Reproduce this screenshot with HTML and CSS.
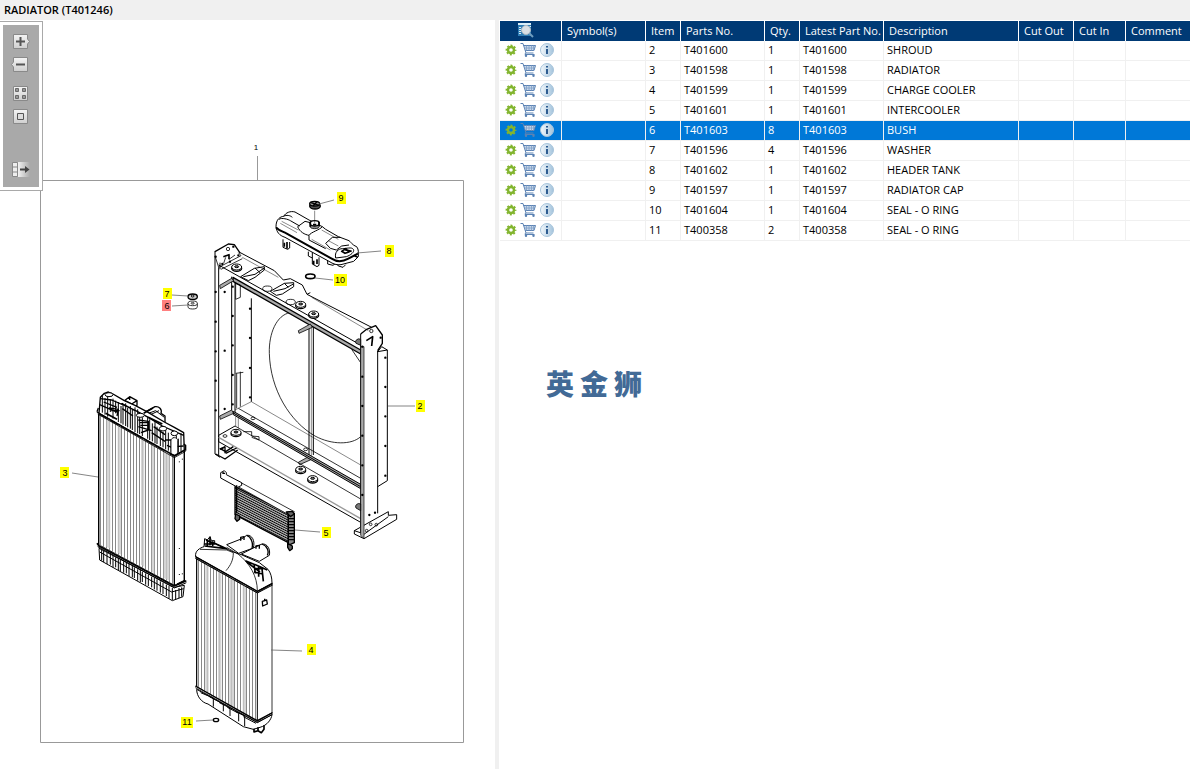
FILE: index.html
```html
<!DOCTYPE html>
<html lang="en">
  <head>
    <meta charset="UTF-8" />
    <meta name="viewport" content="width=device-width, initial-scale=1.0" />
    <title>RADIATOR (T401246)</title>
    <link rel="stylesheet" href="styles.css">
  </head>
  <body>
    <!-- shared icons -->
    <svg class="sprite" aria-hidden="true">
      <defs>
        <linearGradient id="btn-face" x1="0" y1="0" x2="0" y2="1">
          <stop offset="0" stop-color="#f4f4f4" />
          <stop offset="1" stop-color="#cfcfcf" />
        </linearGradient>
        <linearGradient id="info-face" x1="0" y1="0" x2="1" y2="0">
          <stop offset="0" stop-color="#f4f9fc" />
          <stop offset="1" stop-color="#a3c3dc" />
        </linearGradient>
        <linearGradient id="fade" x1="0" y1="0" x2="1" y2="0">
          <stop offset="0" stop-color="#f2f2f2" />
          <stop offset="1" stop-color="#a9a9a9" />
        </linearGradient>
        <symbol id="gear" viewBox="0 0 12 12">
          <circle cx="6" cy="6" r="3" fill="none" stroke="#82b52e" stroke-width="2.4" />
          <circle cx="6" cy="6" r="4.6" fill="none" stroke="#82b52e" stroke-width="1.6" stroke-dasharray="2 1.61" stroke-dashoffset="1" />
        </symbol>
        <symbol id="cart" viewBox="0 0 17 16">
          <path d="M3.5 3H15.500L14 8.500H5.500Z" fill="#c9d7e9" />
          <path d="M.5 1.500H3L6 11H13.500M3.500 3.500H15.500L14 8.500H5.300" fill="none" stroke="#5b82b3" />
          <path d="M4.500 6H14.800M6.500 3.500V8.500M9 3.500V8.500M11.500 3.500V8.500M13.500 3.500V8.500" fill="none" stroke="#7f9fc6" stroke-width="0.8" />
          <path d="M5.500 11L5 12.500H14.500" fill="none" stroke="#5b82b3" />
          <circle cx="6" cy="13.700" r="1.200" fill="#5b82b3" />
          <circle cx="13.500" cy="13.700" r="1.200" fill="#5b82b3" />
        </symbol>
        <symbol id="info" viewBox="0 0 14 14">
          <circle cx="7" cy="7" r="6.500" fill="url(#info-face)" stroke="#a8c5db" />
          <path d="M6 3H8V4.500H6ZM6 6H8V11H6Z" fill="#2d5c90" />
        </symbol>
      </defs>
    </svg>

    <header class="title-bar">
      <h1>RADIATOR (T401246)</h1>
    </header>

    <main class="panes">
      <section class="drawing-pane">
        <div class="toolbar">
          <button type="button" aria-label="Zoom in">
            <svg viewBox="0 0 20 17">
              <path d="M2.500 1.500H16.500V6L18.500 8.500L16.500 11V15.500H2.500Z" fill="url(#btn-face)" stroke="#898989" />
              <path d="M5 8.500H14M9.500 4V13" stroke="#555" stroke-width="2" />
            </svg>
          </button>
          <button type="button" aria-label="Zoom out">
            <svg viewBox="0 0 20 17">
              <path d="M2.500 1.500H16.500V15.500H2.500V11L.5 8.500L2.500 6Z" fill="url(#btn-face)" stroke="#898989" />
              <path d="M5 8.500H14" stroke="#555" stroke-width="2" />
            </svg>
          </button>
          <button type="button" class="gap-above" aria-label="Fit page">
            <svg viewBox="0 0 20 17">
              <path d="M2.500 1.500H16.500V15.500H2.500Z" fill="url(#btn-face)" stroke="#898989" />
              <path d="M4.500 3.500H7.500V6.500H4.500ZM11.500 3.500H14.500V6.500H11.500ZM4.500 10.500H7.500V13.500H4.500ZM11.500 10.500H14.500V13.500H11.500Z" fill="#999" stroke="#6a6a6a" />
            </svg>
          </button>
          <button type="button" aria-label="Actual size">
            <svg viewBox="0 0 20 17">
              <path d="M2.500 1.500H16.500V15.500H2.500Z" fill="url(#btn-face)" stroke="#898989" />
              <path d="M6.500 5.500H12.500V11.500H6.500Z" fill="#ddd" stroke="#555" />
            </svg>
          </button>
          <button type="button" class="gap-end" aria-label="Hide drawing">
            <svg viewBox="0 0 20 17">
              <path d="M7 1H19V16H7Z" fill="url(#fade)" />
              <path d="M1.500 1.500H6.500V15.500H1.500ZM1.500 6H6.500M1.500 11H6.500" fill="#eee" stroke="#898989" />
              <path d="M9 8.500H15" stroke="#444" stroke-width="2" />
              <path d="M14 5L18.500 8.500L14 12Z" fill="#444" />
            </svg>
          </button>
        </div>

        <svg class="drawing" viewBox="0 20 495 749" role="img" aria-label="Radiator exploded view">
          <defs>
            <pattern id="fins" width="9" height="10" patternUnits="userSpaceOnUse">
              <path d="M1.500 0V10" stroke="#888" stroke-width="3" />
            </pattern>
            <pattern id="mesh" width="4" height="7" patternUnits="userSpaceOnUse" patternTransform="skewY(27)">
              <path d="M0 3H4" stroke="#000" stroke-width="4" />
            </pattern>
            <g id="washer">
              <ellipse cy="4" rx="15" ry="9" fill="#fff" stroke="#000" stroke-width="4" />
              <ellipse rx="15" ry="9" fill="#fff" stroke="#000" stroke-width="3" />
              <ellipse cy="-1" rx="6" ry="3" fill="#777" stroke="#000" stroke-width="3" />
            </g>
          </defs>

          <path class="frame" d="M40.500 180.500H463.500V742.500H40.500ZM257.500 156V180" />

          <!-- shroud -->
          <svg x="205" y="180" width="200" height="370" viewBox="0 0 600 1110">
            <g class="ink">
              <path d="M255 398C215 405 191 460 193 520C196 630 255 725 330 768C380 795 440 795 467 770M440 508L467 548" />
              <path d="M312 440V830M325 435V825" stroke-width="3" />
              <path class="thin" d="M319 440V830" />
              <path d="M30 213V822L45 832M41 262V825M80 290V690M90 300V700M139 355V665" stroke-width="3" />
              <path d="M30 215L70 192L88 194L106 220" stroke-width="4" />
              <path d="M41 262L108 227L100 218M56 250L62 232M72 238L90 225M48 268L112 236M30 228L41 262" />
              <path d="M106 218L208 272L235 300L256 296L292 315L306 343L500 442M306 343L316 338" stroke-width="3" />
              <path class="thin" d="M112 232L220 292M320 352L490 452" />
              <path d="M41 255L467 495M45 248V268" stroke-width="3" />
              <path class="grey-fill" d="M84 292L467 510V522L84 304Z" stroke-width="4" />
              <path class="grey-fill" d="M44 316L80 295L86 302L46 326ZM280 452L316 432L322 442L282 460ZM44 708L80 690L86 700L46 718ZM280 847L314 828L320 838L284 854Z" />
              <path d="M107 290L148 265L178 260V270L150 292L130 302ZM150 264L165 278M196 334L238 310L266 308V320L232 342L214 346ZM238 310L250 322M115 290L150 283L178 264M205 334L240 326L265 312" stroke-width="3" />
              <ellipse cx="187" cy="326" rx="14" ry="8" />
              <ellipse cx="257" cy="366" rx="14" ry="8" />
              <path d="M90 310L106 315V352L92 358V310M106 680V575M95 580V685M92 580L115 577" />
              <path class="thin" d="M139 665L467 855M139 665L90 690M92 740V710M100 745V712" />
              <path d="M100 685L467 895M90 738L467 957" />
              <path class="grey-fill" d="M85 694L467 913V926L85 704Z" stroke-width="3" />
              <path d="M85 699L467 920" stroke-width="3" />
              <path d="M41 766L90 738M41 766V785L467 1027" stroke-width="3" />
              <path d="M41 772L467 1016" stroke="#999" stroke-width="4" />
              <path d="M32 822L60 837L98 810M44 805L62 815L85 800M60 820V800L45 808M62 820L95 804" stroke-width="4" />
              <path d="M115 755L140 755V768L162 770V780L140 772" />
              <path d="M467 462L485 448L512 437L532 465V490L518 512" stroke-width="4" />
              <path d="M467 1065V462M518 512V1000M467 1065L477 1075M518 515L530 500L547 510V902L518 920M518 515L547 510" stroke-width="3" />
              <path class="white" d="M448 1052L550 995V1006L575 1004V1018L477 1076L448 1062ZM448 1052L478 1062L550 1010" stroke-width="3" />
              <path class="grey-fill" d="M467 500V1066L477 1076V500Z" stroke-width="2" />
              <path d="M484 482L503 470L500 498M55 230L72 224V238" stroke-width="5" />
              <circle cx="499" cy="453" r="5" /><circle cx="69" cy="207" r="5" />
              <circle cx="497" cy="1033" r="4" /><circle cx="514" cy="1034" r="4" /><circle cx="485" cy="1052" r="4" />
              <ellipse cx="144" cy="715" rx="6" ry="4" /><ellipse cx="302" cy="808" rx="6" ry="4" /><ellipse cx="60" cy="768" rx="6" ry="4" />
              <path d="M453 490A10 9 0 0 1 467 478V496ZM453 984A10 9 0 0 1 467 972V992Z" fill="#777" />
              <use href="#washer" x="95" y="261" /><use href="#washer" x="287" y="373" /><use href="#washer" x="326" y="402" />
              <use href="#washer" x="93" y="757" /><use href="#washer" x="287" y="868" /><use href="#washer" x="323" y="896" />
            </g>
            <g class="bolts">
              <path d="M32 230h.1M32 336h.1M32 425h.1M32 514h.1M32 602h.1M32 691h.1M59 336h.1M59 512h.1M59 687h.1M83 320h.1M83 408h.1M83 496h.1M83 585h.1M83 673h.1" />
              <path d="M135 386h.1M135 474h.1M135 564h.1M135 652h.1M52 805h.1M52 252h.1M85 200h.1M75 245h.1M100 226h.1" />
              <path d="M472 500h.1M472 590h.1M472 678h.1M472 767h.1M472 856h.1M472 945h.1M541 533h.1M541 621h.1M541 709h.1M541 798h.1M541 887h.1M527 473h.1M510 998h.1M493 1005h.1" />
            </g>
          </svg>

          <!-- header tank, cap and o-ring -->
          <svg x="205" y="180" width="200" height="120" viewBox="0 0 600 360">
            <g class="ink">
              <ellipse cx="330" cy="78" rx="16" ry="9" fill="#555" stroke-width="4" />
              <ellipse cx="329" cy="71" rx="15" ry="7" fill="#999" stroke-width="4" />
              <path d="M318 68L342 76M336 65L324 78" stroke-width="4" />
              <path class="white" d="M234 178V202L248 208L254 204V186M322 215V252L336 260L342 256V232M310 215V228L322 234M368 240V252L384 256L394 248L400 258L414 262L422 254" stroke-width="3" />
              <path class="white" d="M213 140C213 118 225 110 236 109C242 98 256 92 270 96L312 120L352 140L362 148L400 170L432 182C440 188 440 194 455 200C462 208 460 222 460 230L446 244L408 254C396 256 384 252 372 244L240 172C222 166 215 156 213 140Z" stroke-width="3" />
              <path d="M213 142C222 152 232 154 244 160L380 236C395 246 412 246 430 236L460 220" stroke-width="6" />
              <path d="M236 109C244 104 256 106 262 112M222 118C230 112 250 118 256 122L284 138M278 140L300 124L316 128M278 140C284 156 300 164 312 166V180L362 206M312 166C318 156 344 150 352 140M362 190L382 172L406 172M362 190L376 205L394 210L410 198L432 195M392 234C388 216 400 206 412 206C424 206 440 200 445 208C450 216 436 226 424 230Z" stroke-width="3" />
              <path class="thin" d="M230 124L280 150M226 130L276 158M320 178L376 210M370 182L400 198M350 150L400 178" />
              <ellipse cx="329" cy="138" rx="14" ry="8" fill="#888" />
              <ellipse cx="329" cy="130" rx="14" ry="8" fill="#fff" stroke-width="4" />
              <path d="M316 126V140M342 126V138M324 134H334M410 214L422 206L432 216L420 220ZM416 208L440 214M446 226L458 232" stroke-width="5" />
              <path class="thin" d="M329 92V130" />
              <path d="M238 188V200M246 186V206M326 242V254M336 238V252" stroke-width="5" />
              <ellipse cx="316" cy="289" rx="14" ry="7" stroke-width="5" />
            </g>
          </svg>

          <!-- bush and washer -->
          <svg x="150" y="270" width="80" height="50" viewBox="0 0 240 150">
            <g class="ink">
              <ellipse cx="128" cy="80" rx="14" ry="8" stroke-width="4" fill="#ccc" />
              <ellipse cx="128" cy="78" rx="4" ry="3" fill="#fff" stroke-width="3" />
              <path d="M114 100V110A14 7 0 0 0 142 110V100" fill="#fff" />
              <ellipse cx="128" cy="100" rx="14" ry="7" fill="#fff" />
              <ellipse cx="128" cy="100" rx="5" ry="3" fill="#999" class="thin" />
            </g>
          </svg>

          <!-- intercooler -->
          <svg x="205" y="460" width="200" height="100" viewBox="0 300 600 300">
            <g class="ink">
              <path d="M90 380L250 460V548L90 464Z" fill="url(#mesh)" stroke-width="4" />
              <path class="white" d="M92 376L108 368L268 455L254 466Z" />
              <path class="white" d="M47 338L58 332L64 338V344L110 368V376L98 382L47 354Z" stroke-width="3" />
              <path d="M52 340h8M54 336V342" stroke-width="4" />
              <path d="M250 466L268 460V548L250 556Z" fill="#888" stroke-width="4" />
              <path d="M250 476H268M250 485H268M250 494H268M250 503H268M250 512H268M250 521H268M250 530H268M250 539H268M95 376V460" stroke-width="4" />
              <path d="M92 462L104 468V478L96 484L90 476ZM248 550L262 558V566L254 572L248 562ZM244 456L262 454L268 462L256 470Z" fill="#666" stroke-width="4" />
            </g>
          </svg>

          <!-- radiator -->
          <svg x="85" y="380" width="120" height="230" viewBox="0 0 360 690">
            <g class="ink">
              <path class="white" d="M118 62L134 50L156 62V76L140 84ZM120 62L140 72L156 62M134 50V60" stroke-width="4" />
              <path class="white" d="M178 98L210 80C222 78 232 88 228 100L240 108V130L215 120Z" stroke-width="4" />
              <path d="M190 100L212 92L238 112M192 106L222 92" stroke-width="3" />
              <path class="white" d="M42 100L46 52L58 40L70 36L84 42L118 62L150 76L184 94L238 126L268 142L296 158L298 212L268 230Z" stroke-width="4" />
              <path d="M52 46V98M60 54V104M68 50V110M76 58V96M84 56V116M92 62V100M100 66V126M108 78V130M114 76V134M122 70V138M128 84V142M136 78V146M142 90V150M150 82V156M158 88V160M164 110V162M172 112V168M188 110V176M194 118V180M202 130V184M210 124V190M216 140V192M226 150V198M234 156V202M242 150V208M250 158V212M258 180V218M266 172V224M274 166V222M280 176V218M288 160V214" stroke-width="3" />
              <path d="M46 56L80 60L118 76L152 92L190 112L232 138L296 166M44 74L76 88L100 98M72 84L100 88L96 108M56 66L96 82M110 70L150 92M112 86L144 108M160 120L190 124V150L168 158M160 140L200 152M206 140L240 164M200 158L240 184M240 180H262M246 196L268 206M270 200L296 198M165 128H190M78 92H104M166 136H192" stroke-width="4" />
              <path d="M176 100L204 84M190 112L232 132M62 100L96 118" stroke-width="5" />
              <ellipse cx="72" cy="44" rx="12" ry="6" fill="#fff" stroke-width="3" />
              <ellipse cx="166" cy="106" rx="12" ry="6" fill="#fff" stroke-width="3" />
              <ellipse cx="234" cy="146" rx="11" ry="7" fill="#fff" stroke-width="3" />
              <ellipse cx="268" cy="160" rx="10" ry="7" fill="#fff" stroke-width="3" />
              <path class="white" d="M258 222V182C258 170 278 170 278 182V222" />
              <path class="white" d="M41 103L268 230L298 212V602L268 616L41 494Z" />
              <path class="fins" d="M41 103L268 230V616L41 494Z" fill="url(#fins)" />
              <path class="shade" d="M64 118h12V506l-12 -6ZM98 136h10V524l-10 -6ZM168 176h10V560l-10 -6ZM200 194h8V580l-8 -4ZM236 214h18V602l-18 -8Z" />
              <path d="M41 103V494M268 230V616M298 212V602" stroke-width="4" />
              <path d="M36 95L42 100L268 227L302 208M36 95L40 84M302 212V196L296 192" stroke-width="4" />
              <path d="M38 102L268 233L302 214" />
              <path class="white" d="M42 505L44 540L262 662L294 650L298 616L268 622Z" stroke-width="3" />
              <path d="M50 508V542M56 512V546M66 518V552M76 522V554M84 526V562M92 532V562M100 534V570M106 540V574M116 544V578M124 548V580M132 552V588M142 558V592M148 562V594M158 568V602M166 570V606M172 576V606M182 580V614M190 584V618M200 590V622M208 594V628M216 598V632M226 604V638M234 608V642M244 614V648M252 618V656M262 624V660M272 630V658M282 624V654M290 622V650" stroke-width="3" />
              <path d="M44 516L260 636L296 626" stroke-width="3" />
              <path d="M36 490L42 498L268 618L304 602" stroke-width="5" />
              <path d="M38 500L268 624L304 608M276 612L300 600" stroke-width="3" />
              <path d="M283 244v3M292 236v3M283 504v3M283 582v3M292 580v3" stroke-width="3" />
            </g>
          </svg>

          <!-- charge cooler -->
          <svg x="180" y="520" width="120" height="230" viewBox="0 0 360 690">
            <g class="ink">
              <path class="white" d="M140 74L186 56L200 46C216 44 226 62 220 84L176 100Z" stroke-width="3" />
              <path class="white" d="M184 102L228 80L246 72C262 70 272 88 268 106L238 124Z" stroke-width="3" />
              <path d="M200 46C214 50 220 70 216 84M246 72C262 78 268 94 262 106M182 62V52L192 50V60M228 86V78L238 76V86" stroke-width="4" />
              <path class="white" d="M47 110C44 92 60 84 72 80L74 56L82 60L90 50L94 62L104 62V70L160 96L184 104L238 128L264 148C272 158 276 172 276 190L232 214Z" stroke-width="3" />
              <path d="M60 88L140 90L160 98C160 120 152 136 138 152M140 82L174 102C210 130 232 170 232 212" />
              <path d="M74 78L140 86L100 68M78 60L106 72M82 62V80M90 50V76M98 64V78M72 72H104M196 122L240 140L262 150M200 126L240 156M222 132L226 160M236 138V170M246 146L250 184M222 156L248 162M228 146H250" stroke-width="5" />
              <path class="white" d="M50 116L232 218L276 192V578L232 604L50 500Z" />
              <path class="fins" d="M50 116L232 218V604L50 500Z" fill="url(#fins)" />
              <path class="shade" d="M76 132h10V516l-10 -4ZM114 152h10V540l-10 -6ZM148 172h14V560l-14 -6ZM188 194h10V582l-10 -6Z" />
              <path d="M46 110L232 214L278 190" stroke-width="4" />
              <path d="M46 115L232 219L278 195M50 116V500M232 218V604" stroke-width="3" />
              <path d="M247 244L260 240L262 252L248 258ZM254 240V236" stroke-width="4" />
              <path class="white" d="M50 508C50 530 66 548 84 552L190 620L220 628L240 622C262 616 274 598 276 584L232 608Z" stroke-width="3" />
              <path d="M62 518L100 534V560M88 530L130 552V574M118 548L150 564V588M142 562L176 580V604M166 574L194 588V618M190 590L228 610" stroke-width="3" />
              <path d="M222 626V636L234 632L244 638L252 628V616M234 622V634" stroke-width="5" />
              <path d="M46 498L232 602L278 578" stroke-width="4" />
              <path d="M46 503L232 607L278 583" />
              <ellipse cx="108" cy="600" rx="8" ry="5" stroke-width="4" />
            </g>
          </svg>

          <path class="leader" d="M319 204L334 200M357 253L381 251M315 278L333 280M172 295L188 296M172 306L188 305M388 406H415M72 473L98 477M295 530L320 532M271 650L302 651M196 721L213 720" />

          <g class="callouts">
            <path d="M337 192h9v12h-9ZM385 245h9v12h-9ZM334 274h13v12h-13ZM163 288h9v11h-9ZM416 400h9v12h-9ZM60 467h9v11h-9ZM322 527h9v11h-9ZM307 644h9v11h-9ZM181 717h12v11h-12Z" />
            <path class="picked" d="M162 300h9v11h-9Z" />
            <text class="small" x="256" y="150">1</text>
            <text x="341" y="201">9</text>
            <text x="389" y="254">8</text>
            <text x="340" y="283">10</text>
            <text x="167" y="297">7</text>
            <text x="167" y="309">6</text>
            <text x="420" y="409">2</text>
            <text x="65" y="476">3</text>
            <text x="326" y="536">5</text>
            <text x="311" y="653">4</text>
            <text x="187" y="725">11</text>
          </g>
        </svg>
      </section>

      <div class="splitter"></div>

      <section class="parts-pane">
        <table class="parts">
          <colgroup>
            <col class="col-actions"><col class="col-wide"><col class="col-narrow"><col class="col-wide"><col class="col-narrow"><col class="col-wide"><col class="col-desc"><col class="col-cutout"><col class="col-cutin"><col>
          </colgroup>
          <thead>
            <tr>
              <th>
                <button type="button" aria-label="Search list">
                  <svg width="18" height="16" viewBox="0 0 18 16">
                    <path d="M1 1H14V14H1Z" fill="#2f7db5" />
                    <path d="M1 1H14V3H1Z" fill="#d8edf8" />
                    <path d="M2 5.500H4M2 7.500H4M2 9.500H4M2 11.500H4M12.500 4.500H14" stroke="#d8edf8" />
                    <path d="M12 11L16 15" stroke="#6f9dbf" stroke-width="2" />
                    <circle cx="9" cy="8" r="4.500" fill="#d9dfe4" stroke="#aeb9c2" />
                  </svg>
                </button>
              </th>
              <th>Symbol(s)</th><th>Item</th><th>Parts No.</th><th>Qty.</th><th>Latest Part No.</th><th>Description</th><th>Cut Out</th><th>Cut In</th><th>Comment</th>
            </tr>
          </thead>
          <tbody>
            <tr>
              <td><div class="actions"><button type="button" aria-label="Options"><svg class="gear"><use href="#gear" /></svg></button><button type="button" aria-label="Add to cart"><svg class="cart"><use href="#cart" /></svg></button><button type="button" aria-label="Info"><svg class="info"><use href="#info" /></svg></button></div></td>
              <td></td><td>2</td><td>T401600</td><td>1</td><td>T401600</td><td>SHROUD</td><td></td><td></td><td></td>
            </tr>
            <tr>
              <td><div class="actions"><button type="button" aria-label="Options"><svg class="gear"><use href="#gear" /></svg></button><button type="button" aria-label="Add to cart"><svg class="cart"><use href="#cart" /></svg></button><button type="button" aria-label="Info"><svg class="info"><use href="#info" /></svg></button></div></td>
              <td></td><td>3</td><td>T401598</td><td>1</td><td>T401598</td><td>RADIATOR</td><td></td><td></td><td></td>
            </tr>
            <tr>
              <td><div class="actions"><button type="button" aria-label="Options"><svg class="gear"><use href="#gear" /></svg></button><button type="button" aria-label="Add to cart"><svg class="cart"><use href="#cart" /></svg></button><button type="button" aria-label="Info"><svg class="info"><use href="#info" /></svg></button></div></td>
              <td></td><td>4</td><td>T401599</td><td>1</td><td>T401599</td><td>CHARGE COOLER</td><td></td><td></td><td></td>
            </tr>
            <tr>
              <td><div class="actions"><button type="button" aria-label="Options"><svg class="gear"><use href="#gear" /></svg></button><button type="button" aria-label="Add to cart"><svg class="cart"><use href="#cart" /></svg></button><button type="button" aria-label="Info"><svg class="info"><use href="#info" /></svg></button></div></td>
              <td></td><td>5</td><td>T401601</td><td>1</td><td>T401601</td><td>INTERCOOLER</td><td></td><td></td><td></td>
            </tr>
            <tr class="selected">
              <td><div class="actions"><button type="button" aria-label="Options"><svg class="gear"><use href="#gear" /></svg></button><button type="button" aria-label="Add to cart"><svg class="cart"><use href="#cart" /></svg></button><button type="button" aria-label="Info"><svg class="info"><use href="#info" /></svg></button></div></td>
              <td></td><td>6</td><td>T401603</td><td>8</td><td>T401603</td><td>BUSH</td><td></td><td></td><td></td>
            </tr>
            <tr>
              <td><div class="actions"><button type="button" aria-label="Options"><svg class="gear"><use href="#gear" /></svg></button><button type="button" aria-label="Add to cart"><svg class="cart"><use href="#cart" /></svg></button><button type="button" aria-label="Info"><svg class="info"><use href="#info" /></svg></button></div></td>
              <td></td><td>7</td><td>T401596</td><td>4</td><td>T401596</td><td>WASHER</td><td></td><td></td><td></td>
            </tr>
            <tr>
              <td><div class="actions"><button type="button" aria-label="Options"><svg class="gear"><use href="#gear" /></svg></button><button type="button" aria-label="Add to cart"><svg class="cart"><use href="#cart" /></svg></button><button type="button" aria-label="Info"><svg class="info"><use href="#info" /></svg></button></div></td>
              <td></td><td>8</td><td>T401602</td><td>1</td><td>T401602</td><td>HEADER TANK</td><td></td><td></td><td></td>
            </tr>
            <tr>
              <td><div class="actions"><button type="button" aria-label="Options"><svg class="gear"><use href="#gear" /></svg></button><button type="button" aria-label="Add to cart"><svg class="cart"><use href="#cart" /></svg></button><button type="button" aria-label="Info"><svg class="info"><use href="#info" /></svg></button></div></td>
              <td></td><td>9</td><td>T401597</td><td>1</td><td>T401597</td><td>RADIATOR CAP</td><td></td><td></td><td></td>
            </tr>
            <tr>
              <td><div class="actions"><button type="button" aria-label="Options"><svg class="gear"><use href="#gear" /></svg></button><button type="button" aria-label="Add to cart"><svg class="cart"><use href="#cart" /></svg></button><button type="button" aria-label="Info"><svg class="info"><use href="#info" /></svg></button></div></td>
              <td></td><td>10</td><td>T401604</td><td>1</td><td>T401604</td><td>SEAL - O RING</td><td></td><td></td><td></td>
            </tr>
            <tr>
              <td><div class="actions"><button type="button" aria-label="Options"><svg class="gear"><use href="#gear" /></svg></button><button type="button" aria-label="Add to cart"><svg class="cart"><use href="#cart" /></svg></button><button type="button" aria-label="Info"><svg class="info"><use href="#info" /></svg></button></div></td>
              <td></td><td>11</td><td>T400358</td><td>2</td><td>T400358</td><td>SEAL - O RING</td><td></td><td></td><td></td>
            </tr>
          </tbody>
        </table>
        <p class="brand" lang="zh"><span>英</span><span>金</span><span>狮</span></p>
      </section>
    </main>
  </body>
</html>
```

FILE: styles.css
```css
* {
  box-sizing: border-box;
}

body {
  margin: 0;
  min-height: 100vh;
  display: flex;
  flex-direction: column;
  font-family: "Open Sans", "Noto Sans", sans-serif;
  font-size: 11px;
  color: #000;
  background: #fff;
}

button {
  padding: 0;
  border: none;
  background: none;
  display: block;
  cursor: pointer;
}

svg {
  display: block;
}

.sprite {
  position: absolute;
  width: 0;
  height: 0;
}

.title-bar {
  background: #f0f0f0;
  height: 20px;
  padding: 0 4px;
}

.title-bar h1 {
  margin: 0;
  font-size: 11px;
  font-weight: 600;
  line-height: 20px;
}

.panes {
  flex: 1;
  display: grid;
  grid-template-columns: minmax(0, 495fr) 5px minmax(0, 690fr);
}

.splitter {
  background: #f0f0f0;
  border-right: 1px solid #fff;
}

/* drawing */
.drawing-pane {
  position: relative;
}

.drawing {
  width: 100%;
}

.toolbar {
  position: absolute;
  top: 1px;
  left: 0;
  width: 43px;
  height: 170px;
  padding: 11px 0 0 8px;
  display: flex;
  flex-direction: column;
  gap: 6px;
  background: #a9a9a9;
  border: 1px solid #a9a9a9;
  border-left: none;
  box-shadow: inset 0 0 0 3px #fff;
}

.toolbar button,
.toolbar svg {
  width: 20px;
  height: 17px;
}

.toolbar button {
  margin-left: 3px;
}

.toolbar .gap-above {
  margin-top: 6px;
}

.toolbar .gap-end {
  margin-top: 30px;
}

.frame {
  fill: none;
  stroke: #999;
}

.leader {
  fill: none;
  stroke: #666;
  stroke-width: 0.8;
}

.ink {
  fill: none;
  stroke: #000;
  stroke-width: 2.4;
  stroke-linejoin: round;
}

.ink .white {
  fill: #fff;
}

.ink .thin {
  stroke-width: 1.4;
}

.ink .grey-fill {
  fill: #aaa;
}

.ink .fins {
  stroke: none;
}

.ink .shade {
  fill: #ccc;
  stroke: none;
  opacity: 0.8;
}

.bolts {
  fill: none;
  stroke: #000;
  stroke-width: 7;
  stroke-linecap: round;
}

.callouts {
  font-family: "Liberation Sans", Arial, sans-serif;
  font-size: 9px;
  text-anchor: middle;
}

.callouts path {
  fill: #ff0;
}

.callouts .picked {
  fill: #ff8080;
}

.callouts .small {
  font-size: 8px;
}

/* parts list */
.parts-pane {
  padding-top: 1px;
}

.parts {
  width: 100%;
  table-layout: fixed;
  border-collapse: separate;
  border-spacing: 0;
}

.col-actions {
  width: 62px;
}

.col-wide {
  width: 84px;
}

.col-narrow {
  width: 35px;
}

.col-desc {
  width: 135px;
}

.col-cutout {
  width: 55px;
}

.col-cutin {
  width: 52px;
}

.parts th,
.parts td {
  height: 20px;
  padding: 0 0 2px 3px;
  line-height: 17px;
  text-align: left;
  white-space: nowrap;
  border-right: 1px solid #f0f0f0;
}

.parts th {
  padding-left: 5px;
  font-weight: 400;
  color: #fff;
  background: #003a75;
  border-right-color: #fff;
}

.parts td {
  border-bottom: 1px solid #f0f0f0;
}

.parts th:last-child,
.parts td:last-child {
  border-right: none;
}

.parts th button {
  margin-left: 12px;
}

.parts .selected td {
  color: #fff;
  background: #0078d7;
}

.actions {
  display: flex;
  align-items: center;
  gap: 3px;
  padding: 1px 0 0 2px;
}

.gear {
  width: 12px;
  height: 12px;
}

.cart {
  width: 17px;
  height: 16px;
}

.info {
  width: 14px;
  height: 14px;
}

.brand {
  margin: 126px 0 0 46px;
  display: flex;
  gap: 6px;
  font-family: "Noto Sans CJK SC", sans-serif;
  font-size: 28px;
  font-weight: 900;
  line-height: 32px;
  color: #426a96;
}
```
